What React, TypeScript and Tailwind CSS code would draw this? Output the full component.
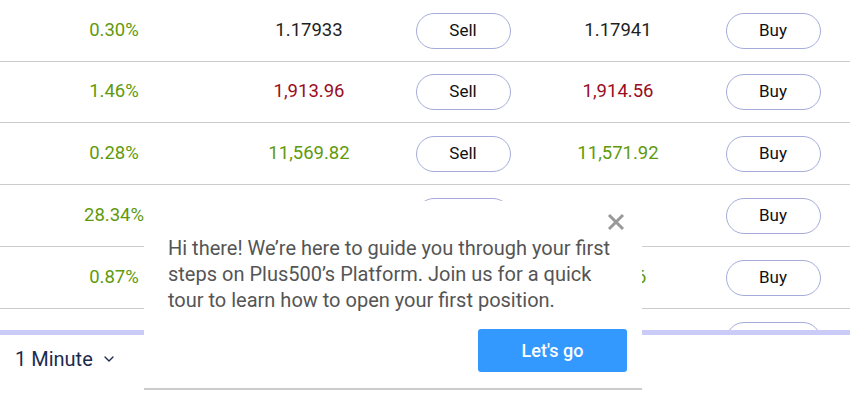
import { ChevronDown } from 'lucide-react'

type Row = {
  change: string
  sell: string
  buy: string
  tone: 'dark' | 'red' | 'green'
  h: string
}

const rows: Row[] = [
  { change: '0.30%', sell: '1.17933', buy: '1.17941', tone: 'dark', h: 'h-[62px]' },
  { change: '1.46%', sell: '1,913.96', buy: '1,914.56', tone: 'red', h: 'h-[61px]' },
  { change: '0.28%', sell: '11,569.82', buy: '11,571.92', tone: 'green', h: 'h-[62px]' },
  { change: '28.34%', sell: '3.218', buy: '3.245', tone: 'green', h: 'h-[62px]' },
  { change: '0.87%', sell: '112.45', buy: '112.56', tone: 'green', h: 'h-[62px]' },
]

const toneClass = {
  dark: 'text-[#1f1f1f]',
  red: 'text-[#990d1f]',
  green: 'text-[#5f9a0c]',
}

function PillButton({ label }: { label?: string }) {
  return (
    <button className="h-[36px] w-[95px] shrink-0 rounded-full border border-[#a5acd9] bg-white text-[17px] text-[#111]">
      {label}
    </button>
  )
}

function TourPopover() {
  return (
    <div className="absolute left-[144px] top-[201px] h-[189px] w-[498px] border-b-2 border-[#cccccc] bg-white">
      <button className="absolute right-[16px] top-[11px] text-[#999]">
        <svg width="20" height="20" viewBox="0 0 20 20">
          <path d="M3 3 L17 17 M17 3 L3 17" stroke="currentColor" strokeWidth="3" />
        </svg>
      </button>
      <p className="w-[470px] pl-[24px] pt-[34px] text-[20px] leading-[26px] text-[#555]">
        Hi there! We’re here to guide you through your first steps on Plus500’s Platform. Join us for a quick tour to
        learn how to open your first position.
      </p>
      <button className="absolute bottom-[16px] right-[15px] h-[43px] w-[149px] rounded-[3px] bg-[#3399ff] text-[18px] font-medium text-white">
        Let's go
      </button>
    </div>
  )
}

export default function App() {
  return (
    <div className="relative h-[402px] w-[850px] overflow-hidden bg-white font-['Roboto',sans-serif]">
      <div className="h-[330px] overflow-hidden">
        {rows.map((r, i) => (
          <div
            key={i}
            className={`${r.h} grid grid-cols-[228px_162px_146px_164px_146px] items-center border-b border-[#cccccc] text-[18.5px]`}
          >
            <div className="text-center text-[#5f9a0c]">{r.change}</div>
            <div className={`text-center ${toneClass[r.tone]}`}>{r.sell}</div>
            <div className="flex justify-center">
              <PillButton label="Sell" />
            </div>
            <div className={`text-center ${toneClass[r.tone]}`}>{r.buy}</div>
            <div className="flex justify-center">
              <PillButton label="Buy" />
            </div>
          </div>
        ))}
        <div className="grid h-[62px] grid-cols-[228px_162px_146px_164px_146px] items-center">
          <div />
          <div />
          <div className="flex justify-center">
            <PillButton />
          </div>
          <div />
          <div className="flex justify-center">
            <PillButton />
          </div>
        </div>
      </div>
      <div className="h-[5px] bg-[#cbcbf7]" />
      <div className="flex h-[47px] items-center gap-[8px] pl-[15px] text-[20px] text-[#1c2a4f]">
        <span>1 Minute</span>
        <ChevronDown size={16} strokeWidth={2} />
      </div>
      <TourPopover />
    </div>
  )
}
